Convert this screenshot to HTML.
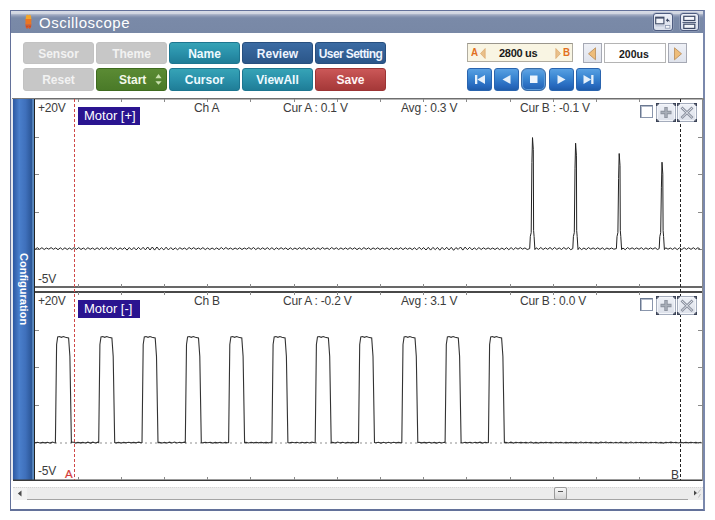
<!DOCTYPE html>
<html><head><meta charset="utf-8">
<style>
*{box-sizing:border-box;margin:0;padding:0}
html,body{width:715px;height:520px;overflow:hidden;background:#fff;font-family:"Liberation Sans",sans-serif;position:relative}
.a{position:absolute}
#win{left:10px;top:10px;width:695px;height:501px;border:1px solid #63719a;border-right-color:#7a88ac;border-bottom-width:2px;border-right-width:2px;background:#fff}
#title{left:11px;top:11px;width:692px;height:22px;background:linear-gradient(#d8dce6 0px,#d0d5e0 2.5px,#abb4c8 3.5px,#8e9bb6 5px,#7a8aa8 7px,#7888a6 100%)}
#title .t{left:28px;top:2.5px;font-size:15px;color:#fff;letter-spacing:0.5px}
.tb{border-radius:3px;border:1px solid #4e5c80;background:linear-gradient(#eceff7,#d9dfeb);box-shadow:0 0 0 0.5px #9aa6c0}
.btn{position:absolute;width:71px;height:22px;border-radius:3px;color:#fff;font-weight:bold;font-size:12px;text-align:center;line-height:22px}
.gray{background:#c7c7c7;color:#f2f2f2;border:1px solid #c2c2c2}
.teal{background:linear-gradient(#36a3b6,#2a91aa 50%,#1f7d97);border:1px solid #1d7690;color:#eefaff}
.navy{background:linear-gradient(#3b6ba3,#2b5689);border:1px solid #274f7f;color:#eef4ff}
.green{background:linear-gradient(#5b8b34,#4a7a28);border:1px solid #3f6b20;color:#f4f8ea}
.red{background:linear-gradient(#cb5858,#b84747 50%,#a53939);border:1px solid #9c3434;color:#fff4f4}
.tp{position:absolute;top:68px;width:25px;height:23px;border-radius:3px;background:linear-gradient(#58a0e2,#3a86d2 40%,#2769be 80%,#1f5caa);border:1px solid #2a64ae}
.lbl{position:absolute;font-size:12px;letter-spacing:-0.2px;color:#3c3c3c;white-space:pre}
.motor{position:absolute;background:#2a1490;color:#fff;font-size:13px;height:18px;line-height:18px;padding-left:6px;width:62px}
.chk{position:absolute;width:13px;height:13px;border:1px solid #8a96ac;border-top-color:#6a7890;border-left-color:#6a7890;box-shadow:inset 1px 1px 0 #b4bccb;background:#fff}
.pb{position:absolute;width:20px;height:19px;border-radius:1px;background:linear-gradient(#eef1f7,#dde1ea);border:1px solid #a4acbc;box-shadow:inset 0 0 0 1px #f4f6fa}
</style></head><body>
<div id="win" class="a"></div>
<div id="title" class="a">
  <svg class="a" style="left:13px;top:3px" width="9" height="16" viewBox="0 0 9 16">
    <path d="M2,2 L3,0.6 L4.5,1.2 L6,0.6 L7,2 L7.3,5 L1.7,5Z" fill="#f4a52a"/>
    <path d="M1.2,5 H7.6 L7.2,8 L7.6,10.5 H1.2 L1.6,8Z" fill="#eb7622"/>
    <path d="M1.4,10.5 H7.4 L7,13.6 L5.6,15 L4.4,13.8 L3,15 L1.8,13.6Z" fill="#d65a2a"/>
    <path d="M2.5,12 l1,1 M5.5,12 l1,1" stroke="#b03a2a" stroke-width="0.8"/>
  </svg>
  <div class="a t">Oscilloscope</div>
  <div class="a tb" style="left:642px;top:2px;width:20px;height:18px">
    <svg class="a" style="left:0;top:0" width="18" height="16" viewBox="0 0 18 16">
      <rect x="1.7" y="3.2" width="8.2" height="6.6" fill="#f2f4fa" stroke="#3e4a66" stroke-width="1.1"/>
      <path d="M1.7,3.9 H9.9" stroke="#3e4a66" stroke-width="1.4"/>
      <path d="M11.8,6.2 L14,4.2 V5.4 Q15.8,5.6 15.6,8.2 Q14.8,6.9 14,7 V8.2Z" fill="#3e4a66"/>
      <rect x="11.3" y="11.4" width="4.6" height="2.8" fill="#f6f8fc" stroke="#8a96b0" stroke-width="0.8"/>
      <path d="M1.5,11.8 H10" stroke="#c2cadc" stroke-width="1.5"/>
    </svg>
  </div>
  <div class="a tb" style="left:669px;top:2px;width:19px;height:18px">
    <svg class="a" style="left:0;top:0" width="17" height="16" viewBox="0 0 17 16">
      <rect x="2.8" y="2.3" width="11" height="4.2" fill="#f4f6fb" stroke="#3e4a66" stroke-width="1.2"/>
      <path d="M1.5,8.5 H15" stroke="#55617e" stroke-width="1"/>
      <rect x="2.8" y="10.2" width="11" height="4.2" fill="#f4f6fb" stroke="#3e4a66" stroke-width="1.2"/>
    </svg>
  </div>
</div>

<!-- toolbar buttons -->
<div class="btn gray" style="left:23px;top:42px">Sensor</div>
<div class="btn gray" style="left:96px;top:42px">Theme</div>
<div class="btn teal" style="left:169px;top:42px">Name</div>
<div class="btn navy" style="left:242px;top:42px">Review</div>
<div class="btn navy" style="left:315px;top:42px;letter-spacing:-0.6px">User Setting</div>
<div class="btn gray" style="left:23px;top:68px;height:23px;line-height:23px">Reset</div>
<div class="btn green" style="left:96px;top:68px;height:23px;line-height:23px;text-align:left;padding-left:22px">Start
  <svg class="a" style="left:58px;top:5px" width="7" height="11" viewBox="0 0 7 11"><path d="M3.5,0 L6.6,4.3 H0.4Z M0.4,7.2 H6.6 L3.5,10.8Z" fill="#c9e0ae"/></svg>
</div>
<div class="btn teal" style="left:169px;top:68px;height:23px;line-height:23px">Cursor</div>
<div class="btn teal" style="left:242px;top:68px;height:23px;line-height:23px">ViewAll</div>
<div class="btn red" style="left:315px;top:68px;height:23px;line-height:23px">Save</div>

<!-- A/B box -->
<div class="a" style="left:467px;top:43px;width:106px;height:19px;border:1px solid #b0aca0;border-top-color:#9a968c;background:#f9f5e3"></div>
<div class="a" style="left:471px;top:46px;font-size:11.5px;color:#e2701e;font-weight:bold;transform:scaleX(0.85);transform-origin:left">A</div>
<svg class="a" style="left:480px;top:48px" width="6" height="11" viewBox="0 0 6 11"><path d="M5.2,0.5 V10.5 L0.5,5.5Z" fill="#e9c08a" stroke="#d8a060" stroke-width="0.6"/></svg>
<div class="a" style="left:499px;top:47px;font-size:11px;font-weight:bold;color:#1a1a1a;letter-spacing:-0.3px">2800 us</div>
<svg class="a" style="left:555px;top:48px" width="6" height="11" viewBox="0 0 6 11"><path d="M0.8,0.5 V10.5 L5.5,5.5Z" fill="#e9c08a" stroke="#d8a060" stroke-width="0.6"/></svg>
<div class="a" style="left:563px;top:46px;font-size:11.5px;color:#e2701e;font-weight:bold;transform:scaleX(0.85);transform-origin:left">B</div>

<div class="a" style="left:583px;top:43px;width:19px;height:20px;border:1px solid #a6a9b4;background:linear-gradient(#eef0f6,#dfe3ec)"></div>
<svg class="a" style="left:587px;top:47px" width="10" height="14" viewBox="0 0 10 14"><path d="M8.5,0.8 V12.8 L1.5,6.8Z" fill="#eebd7a" stroke="#b88c58" stroke-width="0.8"/></svg>
<div class="a" style="left:604px;top:43px;width:62px;height:20px;border:1px solid #b4b4b4;background:#fff"></div>
<div class="a" style="left:619px;top:47.5px;font-size:10.5px;font-weight:bold;color:#1a1a1a">200us</div>
<div class="a" style="left:668px;top:43px;width:19px;height:20px;border:1px solid #a6a9b4;background:linear-gradient(#eef0f6,#dfe3ec)"></div>
<svg class="a" style="left:673px;top:47px" width="10" height="14" viewBox="0 0 10 14"><path d="M1.5,0.8 V12.8 L8.5,6.8Z" fill="#eebd7a" stroke="#b88c58" stroke-width="0.8"/></svg>

<!-- transport -->
<div class="tp" style="left:467px"><svg class="a" style="left:0;top:0" width="23" height="21" viewBox="0 0 23 21"><rect x="7" y="6" width="2.3" height="9" fill="#e6f0fa"/><path d="M17,6 V15 L9.3,10.5Z" fill="#e6f0fa"/></svg></div>
<div class="tp" style="left:494px"><svg class="a" style="left:0;top:0" width="23" height="21" viewBox="0 0 23 21"><path d="M15.5,6 V15 L7.5,10.5Z" fill="#e6f0fa"/></svg></div>
<div class="tp" style="left:521px;border-radius:6px;border:1px solid #3a6ca6;box-shadow:inset 0 0 0 1px #5d9bd8;background:linear-gradient(#62a6e6,#3d8ad4 40%,#2a6dc0 80%,#2262ae)"><svg class="a" style="left:0;top:0" width="23" height="21" viewBox="0 0 23 21"><rect x="8" y="6.5" width="7.5" height="7.5" fill="#eef5fc"/></svg></div>
<div class="tp" style="left:549px"><svg class="a" style="left:0;top:0" width="23" height="21" viewBox="0 0 23 21"><path d="M7.5,6 V15 L15.5,10.5Z" fill="#e6f0fa"/></svg></div>
<div class="tp" style="left:576px"><svg class="a" style="left:0;top:0" width="23" height="21" viewBox="0 0 23 21"><path d="M6.5,6 V15 L14.2,10.5Z" fill="#e6f0fa"/><rect x="14.2" y="6" width="2.3" height="9" fill="#e6f0fa"/></svg></div>

<!-- scope area -->
<div class="a" style="left:12px;top:98px;width:692px;height:1.5px;background:#7a7a7a"></div>
<div class="a" style="left:13px;top:99px;width:21px;height:381px;background:linear-gradient(90deg,#2c58a2 0%,#4a7fcc 30%,#3f70bb 60%,#2c5798 88%,#5a89bf 94%,#5a89bf 100%)"></div>
<div class="a" style="left:34px;top:99px;width:1px;height:382px;background:#222"></div>
<div class="a" style="left:11px;top:99px;width:2px;height:381px;background:#e4e7ee"></div>
<div class="a" style="left:17px;top:249px;width:14px;height:80px">
  <div class="a" style="left:-29px;top:33px;width:72px;height:14px;transform:rotate(90deg);color:#fff;font-weight:bold;font-size:11px;line-height:14px;text-align:center">Configuration</div>
</div>

<svg class="a" style="left:0;top:0" width="715" height="520">
  <!-- panel borders -->
  <rect x="35" y="99" width="667" height="188" fill="#fff"/>
  <rect x="35" y="292" width="667" height="188" fill="#fff"/>
  <path d="M35,98.75 H703" stroke="#6e6e6e" stroke-width="1.5"/><path d="M35,287 H703" stroke="#686868" stroke-width="2"/><path d="M35,292 H703" stroke="#484848" stroke-width="2"/><path d="M13,480.25 H703" stroke="#3a3a3a" stroke-width="1.5"/>
  <path d="M702.5,98 V481" stroke="#8a8a8a" stroke-width="1"/>
  <path d="M78.5,99 v3 M78.5,287 v-3 M121.5,99 v3 M121.5,287 v-3 M164.5,99 v3 M164.5,287 v-3 M207.5,99 v3 M207.5,287 v-3 M250.5,99 v3 M250.5,287 v-3 M294.5,99 v3 M294.5,287 v-3 M337.5,99 v3 M337.5,287 v-3 M380.5,99 v3 M380.5,287 v-3 M423.5,99 v3 M423.5,287 v-3 M466.5,99 v3 M466.5,287 v-3 M510.5,99 v3 M510.5,287 v-3 M553.5,99 v3 M553.5,287 v-3 M596.5,99 v3 M596.5,287 v-3 M639.5,99 v3 M639.5,287 v-3 M78.5,292 v3 M78.5,480 v-3 M121.5,292 v3 M121.5,480 v-3 M164.5,292 v3 M164.5,480 v-3 M207.5,292 v3 M207.5,480 v-3 M250.5,292 v3 M250.5,480 v-3 M294.5,292 v3 M294.5,480 v-3 M337.5,292 v3 M337.5,480 v-3 M380.5,292 v3 M380.5,480 v-3 M423.5,292 v3 M423.5,480 v-3 M466.5,292 v3 M466.5,480 v-3 M510.5,292 v3 M510.5,480 v-3 M553.5,292 v3 M553.5,480 v-3 M596.5,292 v3 M596.5,480 v-3 M639.5,292 v3 M639.5,480 v-3 M35,137.5 h4 M702,137.5 h-4 M35,174.5 h4 M702,174.5 h-4 M35,212.5 h4 M702,212.5 h-4 M35,249.5 h4 M702,249.5 h-4 M35,330.5 h4 M702,330.5 h-4 M35,367.5 h4 M702,367.5 h-4 M35,405.5 h4 M702,405.5 h-4 M35,442.5 h4 M702,442.5 h-4 " stroke="#8a8a8a" stroke-width="1"/>
  <!-- reference dashed baseline panel 2 -->
  <path d="M35,443 H702" stroke="#8e8e8e" stroke-width="1" stroke-dasharray="2,3"/>
  <!-- cursor lines -->
  <path d="M74.5,99 V480" stroke="#d04848" stroke-width="1" stroke-dasharray="3,2"/>
  <path d="M680.5,99 V480" stroke="#222" stroke-width="1" stroke-dasharray="3,2"/>
  <path d="M35.0,249.4 L37.3,247.7 L39.6,249.4 L41.9,247.7 L44.2,249.5 L46.5,248.0 L48.8,249.2 L51.1,247.6 L53.4,249.3 L55.7,247.9 L58.0,249.7 L60.3,247.8 L62.6,249.6 L64.9,247.8 L67.2,249.5 L69.5,248.0 L71.8,249.5 L74.1,247.6 L76.4,249.4 L78.7,247.6 L81.0,249.5 L83.3,248.0 L85.6,249.6 L87.9,247.7 L90.2,249.3 L92.5,248.0 L94.8,249.6 L97.1,247.8 L99.4,249.5 L101.7,247.6 L104.0,249.5 L106.3,247.5 L108.6,249.4 L110.9,247.6 L113.2,249.4 L115.5,247.5 L117.8,249.7 L120.1,247.9 L122.4,249.4 L124.7,247.7 L127.0,250.1 L129.3,247.5 L131.6,249.9 L133.9,247.5 L136.2,249.9 L138.5,247.4 L140.8,249.7 L143.1,247.3 L145.4,249.9 L147.7,247.0 L150.0,250.0 L152.3,247.0 L154.6,250.1 L156.9,247.0 L159.2,249.9 L161.5,247.7 L163.8,249.9 L166.1,247.2 L168.4,249.9 L170.7,247.6 L173.0,249.7 L175.3,247.9 L177.6,249.7 L179.9,247.7 L182.2,249.3 L184.5,248.0 L186.8,249.6 L189.1,247.5 L191.4,249.2 L193.7,247.6 L196.0,249.4 L198.3,248.0 L200.6,249.3 L202.9,247.6 L205.2,249.6 L207.5,248.0 L209.8,249.5 L212.1,248.0 L214.4,249.5 L216.7,247.9 L219.0,249.6 L221.3,247.5 L223.6,249.4 L225.9,247.5 L228.2,249.3 L230.5,248.0 L232.8,249.5 L235.1,248.0 L237.4,249.3 L239.7,247.8 L242.0,249.5 L244.3,248.0 L246.6,249.2 L248.9,247.6 L251.2,249.3 L253.5,247.5 L255.8,249.6 L258.1,247.8 L260.4,249.4 L262.7,247.8 L265.0,249.5 L267.3,247.7 L269.6,249.5 L271.9,247.7 L274.2,249.7 L276.5,247.8 L278.8,249.4 L281.1,247.7 L283.4,249.3 L285.7,247.9 L288.0,249.7 L290.3,247.8 L292.6,249.5 L294.9,248.0 L297.2,249.4 L299.5,247.7 L301.8,249.2 L304.1,247.7 L306.4,249.5 L308.7,248.0 L311.0,249.5 L313.3,247.8 L315.6,249.5 L317.9,247.9 L320.2,249.5 L322.5,247.6 L324.8,249.2 L327.1,248.0 L329.4,249.5 L331.7,247.5 L334.0,249.3 L336.3,247.8 L338.6,249.5 L340.9,247.9 L343.2,249.4 L345.5,247.9 L347.8,249.4 L350.1,247.7 L352.4,249.3 L354.7,247.8 L357.0,249.6 L359.3,248.0 L361.6,249.5 L363.9,247.6 L366.2,249.3 L368.5,247.9 L370.8,249.6 L373.1,247.9 L375.4,249.3 L377.7,247.8 L380.0,249.5 L382.3,248.0 L384.6,249.3 L386.9,247.9 L389.2,249.6 L391.5,247.8 L393.8,249.6 L396.1,248.0 L398.4,249.3 L400.7,247.7 L403.0,249.6 L405.3,247.8 L407.6,249.3 L409.9,247.9 L412.2,249.6 L414.5,247.8 L416.8,249.8 L419.1,247.3 L421.4,249.5 L423.7,247.6 L426.0,250.0 L428.3,247.3 L430.6,250.1 L432.9,247.4 L435.2,249.6 L437.5,247.5 L439.8,250.2 L442.1,247.4 L444.4,249.8 L446.7,247.3 L449.0,249.9 L451.3,247.3 L453.6,250.3 L455.9,247.6 L458.2,249.4 L460.5,247.0 L462.8,250.1 L465.1,247.1 L467.4,249.6 L469.7,247.3 L472.0,249.8 L474.3,247.9 L476.6,249.6 L478.9,247.6 L481.2,249.5 L483.5,247.8 L485.8,249.3 L488.1,247.9 L490.4,249.3 L492.7,248.0 L495.0,249.5 L497.3,247.9 L499.6,249.6 L501.9,248.0 L504.2,249.6 L506.5,247.7 L508.8,249.7 L511.1,247.6 L513.4,249.6 L515.7,247.7 L518.0,249.2 L520.3,247.6 L522.6,249.2 L524.9,247.9 L527.2,249.5 L529.7,248.6 L530.3,236.6 L531.2,232.6 L531.9,162.6 L532.5,137.6 L533.3,149.6 L533.6,230.6 L534.1,236.6 L534.9,249.6 L536.2,247.8 L538.5,249.4 L540.8,247.5 L543.1,249.5 L545.4,247.9 L547.7,249.3 L550.0,247.5 L552.3,249.5 L554.6,247.5 L556.9,249.4 L559.2,247.9 L561.5,249.5 L563.8,247.5 L566.1,249.3 L568.4,247.5 L570.7,249.7 L572.8,248.6 L573.4,236.6 L574.3,232.6 L575.0,168.2 L575.6,143.2 L576.4,155.2 L576.7,230.6 L577.2,236.6 L578.0,249.6 L579.3,247.6 L581.6,249.6 L583.9,248.0 L586.2,249.5 L588.5,247.6 L590.8,249.2 L593.1,247.9 L595.4,249.3 L597.7,247.8 L600.0,249.4 L602.3,247.8 L604.6,249.6 L606.9,248.0 L609.2,249.2 L611.5,248.0 L613.8,249.2 L616.4,248.6 L617.0,236.6 L617.9,232.6 L618.6,178.5 L619.2,153.5 L620.0,165.5 L620.3,230.6 L620.8,236.6 L621.6,249.6 L622.9,248.0 L625.2,249.7 L627.5,247.6 L629.8,249.2 L632.1,247.8 L634.4,249.3 L636.7,247.9 L639.0,249.3 L641.3,247.7 L643.6,249.5 L645.9,247.9 L648.2,249.3 L650.5,247.9 L652.8,249.2 L655.1,247.7 L657.4,249.5 L659.2,248.6 L659.8,236.6 L660.7,232.6 L661.4,187.2 L662.0,162.2 L662.8,174.2 L663.1,230.6 L663.6,236.6 L664.4,249.6 L665.7,247.8 L668.0,249.2 L670.3,248.0 L672.6,249.4 L674.9,247.7 L677.2,249.6 L679.5,247.8 L681.8,249.6 L684.1,247.7 L686.4,249.4 L688.7,247.8 L691.0,249.4 L693.3,247.7 L695.6,249.4 L697.9,247.7 L700.2,249.4" fill="none" stroke="#222" stroke-width="1"/>
  <path d="M35.0,442.8 L37.5,442.3 L40.0,443.0 L42.5,442.4 L45.0,442.9 L47.5,442.3 L50.0,443.1 L52.5,442.1 L55.0,442.9 L55.4,442.6 L56.6,344.5 L57.7,337.0 L59.4,336.5 L61.4,337.3 L63.4,336.5 L65.4,337.2 L68.6,338.0 L69.9,356.5 L71.4,442.6 L72.9,442.1 L75.4,443.0 L77.9,442.4 L80.4,442.9 L82.9,442.4 L85.4,443.0 L87.9,442.2 L90.4,443.1 L92.9,442.2 L95.4,443.0 L97.9,442.2 L98.7,442.6 L99.9,344.5 L101.0,337.0 L102.7,336.5 L104.7,337.3 L106.7,336.5 L108.7,337.2 L111.9,338.0 L113.2,356.5 L114.7,442.6 L116.2,442.9 L118.7,442.4 L121.2,443.0 L123.7,442.4 L126.2,442.8 L128.7,442.2 L131.2,442.8 L133.7,442.4 L136.2,442.8 L138.7,442.1 L141.2,442.8 L142.0,442.6 L143.2,344.5 L144.3,337.0 L146.0,336.5 L148.0,337.3 L150.0,336.5 L152.0,337.2 L155.2,338.0 L156.5,356.5 L158.0,442.6 L159.5,442.4 L162.0,443.0 L164.5,442.4 L167.0,443.0 L169.5,442.2 L172.0,443.0 L174.5,442.1 L177.0,443.0 L179.5,442.2 L182.0,442.8 L184.5,442.2 L185.3,442.6 L186.5,344.5 L187.6,337.0 L189.3,336.5 L191.3,337.3 L193.3,336.5 L195.3,337.2 L198.5,338.0 L199.8,356.5 L201.3,442.6 L202.8,442.9 L205.3,442.2 L207.8,442.8 L210.3,442.2 L212.8,443.1 L215.3,442.4 L217.8,442.9 L220.3,442.3 L222.8,443.0 L225.3,442.4 L227.8,442.8 L228.6,442.6 L229.8,344.5 L230.9,337.0 L232.6,336.5 L234.6,337.3 L236.6,336.5 L238.6,337.2 L241.8,338.0 L243.1,356.5 L244.6,442.6 L246.1,442.4 L248.6,443.0 L251.1,442.2 L253.6,442.9 L256.1,442.3 L258.6,442.9 L261.1,442.3 L263.6,442.9 L266.1,442.4 L268.6,442.9 L271.1,442.1 L271.9,442.6 L273.1,344.5 L274.2,337.0 L275.9,336.5 L277.9,337.3 L279.9,336.5 L281.9,337.2 L285.1,338.0 L286.4,356.5 L287.9,442.6 L289.4,442.9 L291.9,442.2 L294.4,442.8 L296.9,442.2 L299.4,443.0 L301.9,442.2 L304.4,442.9 L306.9,442.3 L309.4,443.0 L311.9,442.1 L314.4,442.8 L315.2,442.6 L316.4,344.5 L317.5,337.0 L319.2,336.5 L321.2,337.3 L323.2,336.5 L325.2,337.2 L328.4,338.0 L329.7,356.5 L331.2,442.6 L332.7,442.4 L335.2,443.0 L337.7,442.1 L340.2,442.9 L342.7,442.3 L345.2,443.0 L347.7,442.4 L350.2,442.8 L352.7,442.4 L355.2,443.0 L357.7,442.3 L358.5,442.6 L359.7,344.5 L360.8,337.0 L362.5,336.5 L364.5,337.3 L366.5,336.5 L368.5,337.2 L371.7,338.0 L373.0,356.5 L374.5,442.6 L376.0,442.8 L378.5,442.2 L381.0,443.1 L383.5,442.3 L386.0,443.0 L388.5,442.3 L391.0,443.0 L393.5,442.2 L396.0,442.8 L398.5,442.4 L401.0,442.8 L401.8,442.6 L403.0,344.5 L404.1,337.0 L405.8,336.5 L407.8,337.3 L409.8,336.5 L411.8,337.2 L415.0,338.0 L416.3,356.5 L417.8,442.6 L419.3,442.3 L421.8,442.9 L424.3,442.4 L426.8,442.9 L429.3,442.3 L431.8,443.0 L434.3,442.4 L436.8,443.1 L439.3,442.3 L441.8,443.0 L444.3,442.3 L445.1,442.6 L446.3,344.5 L447.4,337.0 L449.1,336.5 L451.1,337.3 L453.1,336.5 L455.1,337.2 L458.3,338.0 L459.6,356.5 L461.1,442.6 L462.6,443.0 L465.1,442.2 L467.6,442.9 L470.1,442.3 L472.6,443.0 L475.1,442.2 L477.6,442.9 L480.1,442.2 L482.6,443.1 L485.1,442.3 L487.6,442.8 L488.4,442.6 L489.6,344.5 L490.7,337.0 L492.4,336.5 L494.4,337.3 L496.4,336.5 L498.4,337.2 L501.6,338.0 L502.9,356.5 L504.4,442.6 L505.9,442.4 L508.4,443.0 L510.9,442.2 L513.4,443.1 L515.9,442.2 L518.4,442.8 L520.9,442.4 L523.4,442.8 L525.9,442.4 L528.4,443.0 L530.9,442.1 L533.4,443.1 L535.9,442.4 L538.4,443.1 L540.9,442.3 L543.4,442.9 L545.9,442.2 L548.4,442.8 L550.9,442.4 L553.4,443.0 L555.9,442.3 L558.4,442.9 L560.9,442.2 L563.4,443.0 L565.9,442.4 L568.4,442.9 L570.9,442.3 L573.4,442.9 L575.9,442.4 L578.4,443.0 L580.9,442.1 L583.4,442.9 L585.9,442.3 L588.4,442.8 L590.9,442.4 L593.4,443.0 L595.9,442.4 L598.4,443.1 L600.9,442.1 L603.4,442.8 L605.9,442.1 L608.4,442.9 L610.9,442.2 L613.4,443.0 L615.9,442.3 L618.4,443.0 L620.9,442.2 L623.4,443.0 L625.9,442.4 L628.4,443.0 L630.9,442.1 L633.4,443.0 L635.9,442.3 L638.4,442.8 L640.9,442.3 L643.4,442.9 L645.9,442.2 L648.4,443.0 L650.9,442.3 L653.4,442.8 L655.9,442.2 L658.4,443.0 L660.9,442.4 L663.4,443.1 L665.9,442.2 L668.4,442.8 L670.9,442.1 L673.4,442.8 L675.9,442.3 L678.4,443.0 L680.9,442.2 L683.4,442.9 L685.9,442.2 L688.4,442.9 L690.9,442.3 L693.4,442.8 L695.9,442.4 L698.4,443.0 L700.9,442.2" fill="none" stroke="#333" stroke-width="1.1"/>
</svg>

<!-- panel labels -->
<div class="lbl" style="left:38px;top:101px">+20V</div>
<div class="lbl" style="left:38px;top:272px">-5V</div>
<div class="lbl" style="left:194px;top:101px">Ch A</div>
<div class="lbl" style="left:283px;top:101px">Cur A : 0.1 V</div>
<div class="lbl" style="left:401px;top:101px">Avg : 0.3 V</div>
<div class="lbl" style="left:520px;top:101px">Cur B : -0.1 V</div>
<div class="motor" style="left:78px;top:107px">Motor [+]</div>

<div class="lbl" style="left:38px;top:294px">+20V</div>
<div class="lbl" style="left:38px;top:464px">-5V</div>
<div class="lbl" style="left:194px;top:294px">Ch B</div>
<div class="lbl" style="left:283px;top:294px">Cur A : -0.2 V</div>
<div class="lbl" style="left:401px;top:294px">Avg : 3.1 V</div>
<div class="lbl" style="left:520px;top:294px">Cur B : 0.0 V</div>
<div class="motor" style="left:78px;top:300px">Motor [-]</div>
<div class="lbl" style="left:65px;top:468px;color:#d43c3c;font-size:11.5px;-webkit-text-stroke:0.2px #d43c3c">A</div>
<div class="lbl" style="left:671px;top:468px;font-size:12px">B</div>

<!-- panel buttons -->
<div class="chk" style="left:640px;top:105px"></div>
<div class="pb" style="left:656px;top:103px"><svg class="a" style="left:-1px;top:-1px" width="20" height="19" viewBox="0 0 20 19"><path d="M0,0 h3 v1.5 h-1.5 v1.5 h-1.5z M20,0 h-3 v1.5 h1.5 v1.5 h1.5z M0,19 h3 v-1.5 h-1.5 v-1.5 h-1.5z M20,19 h-3 v-1.5 h1.5 v-1.5 h1.5z" fill="#3a4256"/><path d="M10,4 V15 M4.5,9.5 H15.5" stroke="#8a909c" stroke-width="3.4"/><path d="M10,4.8 V14.2 M5.3,9.5 H14.7" stroke="#a8aeb8" stroke-width="1.6"/></svg></div>
<div class="pb" style="left:677px;top:103px"><svg class="a" style="left:-1px;top:-1px" width="20" height="19" viewBox="0 0 20 19"><path d="M0,0 h3 v1.5 h-1.5 v1.5 h-1.5z M20,0 h-3 v1.5 h1.5 v1.5 h1.5z M0,19 h3 v-1.5 h-1.5 v-1.5 h-1.5z M20,19 h-3 v-1.5 h1.5 v-1.5 h1.5z" fill="#3a4256"/><path d="M4.5,4.5 L15.5,15 M15.5,4.5 L4.5,15" stroke="#8c92a0" stroke-width="2.8"/><path d="M5,5 L15,14.5 M15,5 L5,14.5" stroke="#dfe3ea" stroke-width="1"/></svg></div>
<div class="chk" style="left:640px;top:298px"></div>
<div class="pb" style="left:656px;top:296px"><svg class="a" style="left:-1px;top:-1px" width="20" height="19" viewBox="0 0 20 19"><path d="M0,0 h3 v1.5 h-1.5 v1.5 h-1.5z M20,0 h-3 v1.5 h1.5 v1.5 h1.5z M0,19 h3 v-1.5 h-1.5 v-1.5 h-1.5z M20,19 h-3 v-1.5 h1.5 v-1.5 h1.5z" fill="#3a4256"/><path d="M10,4 V15 M4.5,9.5 H15.5" stroke="#8a909c" stroke-width="3.4"/><path d="M10,4.8 V14.2 M5.3,9.5 H14.7" stroke="#a8aeb8" stroke-width="1.6"/></svg></div>
<div class="pb" style="left:677px;top:296px"><svg class="a" style="left:-1px;top:-1px" width="20" height="19" viewBox="0 0 20 19"><path d="M0,0 h3 v1.5 h-1.5 v1.5 h-1.5z M20,0 h-3 v1.5 h1.5 v1.5 h1.5z M0,19 h3 v-1.5 h-1.5 v-1.5 h-1.5z M20,19 h-3 v-1.5 h1.5 v-1.5 h1.5z" fill="#3a4256"/><path d="M4.5,4.5 L15.5,15 M15.5,4.5 L4.5,15" stroke="#8c92a0" stroke-width="2.8"/><path d="M5,5 L15,14.5 M15,5 L5,14.5" stroke="#dfe3ea" stroke-width="1"/></svg></div>

<!-- scrollbar -->
<div class="a" style="left:13px;top:487px;width:690px;height:13px;background:#ececec;border-top:1px dotted #d4d4d4"></div>
<div class="a" style="left:27px;top:499px;width:661px;height:1px;background:#a4a4a4"></div>
<div class="a" style="left:13px;top:488px;width:14px;height:12px;background:#f2f2f2"></div><svg class="a" style="left:17px;top:490px" width="6" height="7" viewBox="0 0 6 7"><path d="M4.5,0.5 V6.5 L0.8,3.5Z" fill="#4a4a4a"/></svg>
<svg class="a" style="left:693px;top:489px" width="8" height="9" viewBox="0 0 8 9"><path d="M1,1.5 V6.5 L4,4Z" fill="#4a4a4a"/><path d="M7.5,0.5 L4.5,4.5 M5.5,8.5 L7.5,5" stroke="#b0b0b0" stroke-width="0.8"/></svg>
<div class="a" style="left:554px;top:487px;width:13px;height:13px;border:1px solid #9a9a9a;border-radius:2px;background:linear-gradient(#f8f8f8,#d4d4d4)"><div class="a" style="left:3px;top:3px;width:5px;height:1px;background:#555"></div></div>
</body></html>
